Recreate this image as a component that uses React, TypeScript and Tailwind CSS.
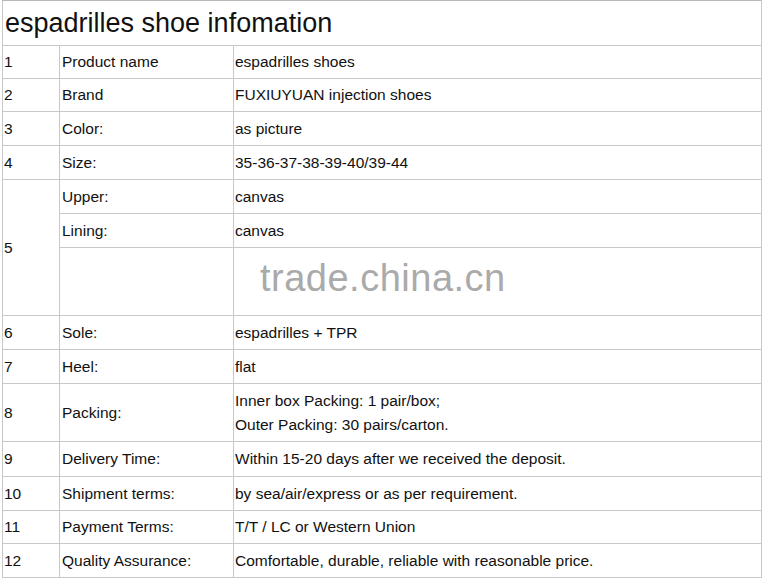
import React from "react";

type Row = {
  no?: string;
  label: string;
  value: React.ReactNode;
  h: number;
};

const rowsTop: Row[] = [
  { no: "1", label: "Product name", value: "espadrilles shoes", h: 33 },
  { no: "2", label: "Brand", value: "FUXIUYUAN injection shoes", h: 33 },
  { no: "3", label: "Color:", value: "as picture", h: 34 },
  { no: "4", label: "Size:", value: "35-36-37-38-39-40/39-44", h: 34 },
];

const rowsBottom: Row[] = [
  { no: "6", label: "Sole:", value: "espadrilles + TPR", h: 34 },
  { no: "7", label: "Heel:", value: "flat", h: 34 },
  {
    no: "8",
    label: "Packing:",
    value: (
      <div className="leading-[24px]">
        <div>Inner box Packing: 1 pair/box;</div>
        <div>Outer Packing: 30 pairs/carton.</div>
      </div>
    ),
    h: 58,
  },
  { no: "9", label: "Delivery Time:", value: "Within 15-20 days after we received the deposit.", h: 35 },
  { no: "10", label: "Shipment terms:", value: "by sea/air/express or as per requirement.", h: 34 },
  { no: "11", label: "Payment Terms:", value: "T/T / LC or Western Union", h: 33 },
  { no: "12", label: "Quality Assurance:", value: "Comfortable, durable, reliable with reasonable price.", h: 34 },
];

const cell = "border border-[#c8c8c8] align-middle p-0";

function SimpleRow({ row }: { row: Row }) {
  return (
    <tr style={{ height: row.h }}>
      <td className={`${cell} pl-[1px]`}>{row.no}</td>
      <td className={`${cell} pl-[2px]`}>{row.label}</td>
      <td className={`${cell} pl-[1px]`}>{row.value}</td>
    </tr>
  );
}

export default function App() {
  return (
    <div className="relative min-h-[579px] w-[762px] bg-white font-['Liberation_Sans',Arial,sans-serif] text-[15.5px] text-[#111]">
      <div className="pl-[2px]">
        <table className="w-[759px] table-fixed border-collapse">
          <colgroup>
            <col className="w-[57px]" />
            <col className="w-[174px]" />
            <col className="w-[528px]" />
          </colgroup>
          <tbody>
            <tr className="h-[45px]">
              <td colSpan={3} className={`${cell} border-t-[#b8b8b8] pl-[2px] text-[27px] leading-none`}>
                espadrilles shoe infomation
              </td>
            </tr>
            {rowsTop.map((r) => (
              <SimpleRow key={r.no} row={r} />
            ))}
            <tr className="h-[34px]">
              <td rowSpan={3} className={`${cell} pl-[1px]`}>
                5
              </td>
              <td className={`${cell} pl-[2px]`}>Upper:</td>
              <td className={`${cell} pl-[1px]`}>canvas</td>
            </tr>
            <tr className="h-[34px]">
              <td className={`${cell} pl-[2px]`}>Lining:</td>
              <td className={`${cell} pl-[1px]`}>canvas</td>
            </tr>
            <tr className="h-[68px]">
              <td className={cell}></td>
              <td className={cell}></td>
            </tr>
            {rowsBottom.map((r) => (
              <SimpleRow key={r.no} row={r} />
            ))}
          </tbody>
        </table>
      </div>
      {/* watermark */}
      <div className="pointer-events-none absolute left-[260px] top-[259px] text-[38px] leading-none tracking-[0.5px] text-[#aaaaaa]">
        trade.china.cn
      </div>
    </div>
  );
}
